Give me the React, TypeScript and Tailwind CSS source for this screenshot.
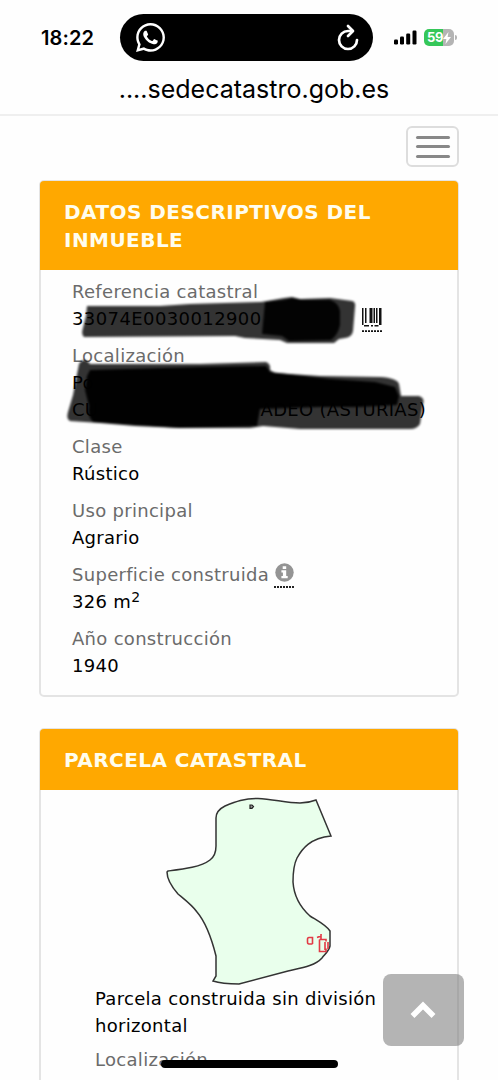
import type { ReactNode } from 'react';
import { FaWhatsapp } from 'react-icons/fa';

function StatusBar() {
  return (
    <div className="relative h-[75px] shrink-0">
      <div className="absolute left-[41px] top-[24px] text-[20px] leading-[28px] font-semibold tracking-[0.1px]">18:22</div>
      <div className="absolute left-[120px] top-[14px] flex h-[47px] w-[253px] items-center justify-between rounded-full bg-black pl-[14px] pr-[13px] text-white">
        <FaWhatsapp className="h-[33px] w-[33px]" />
        <svg viewBox="0 0 24 28" className="h-[28px] w-[24px]" fill="none" stroke="currentColor" strokeWidth="2.7" strokeLinecap="round" strokeLinejoin="round">
          <path d="M21 16a9 9 0 1 1-9-9h4.500" />
          <path d="M12 2l5 5-5 5" />
        </svg>
      </div>
      <svg viewBox="0 0 24 16" className="absolute left-[393px] top-[30px] h-[16px] w-[24px]">
        <rect x="1" y="9.500" width="4" height="5" rx="1.200" />
        <rect x="7" y="6.500" width="4" height="8" rx="1.200" />
        <rect x="13.200" y="3.500" width="4" height="11" rx="1.200" />
        <rect x="19.500" y="0.500" width="4" height="14" rx="1.200" />
      </svg>
      <div className="absolute left-[424px] top-[29px] flex h-[17px] w-[30px] items-center overflow-hidden rounded-[5px] bg-[linear-gradient(90deg,#35c759_62%,#b4b4b4_62%)] pl-[3px] text-[13px] font-bold tracking-[-0.3px] text-white">
        59
        <svg viewBox="0 0 8 12" className="h-[12px] w-[8px]" fill="currentColor">
          <path d="M5.500 0L0 7h3.400L2.500 12 8 5H4.600z" />
        </svg>
      </div>
      <div className="absolute left-[455px] top-[35px] h-[5px] w-[2px] rounded-r bg-[#b4b4b4]" />
    </div>
  );
}

function Card({ title, className, children }: { title: ReactNode; className: string; children: ReactNode }) {
  return (
    <section className={`mx-[39px] w-[420px] shrink-0 rounded-[5px] border-2 border-[#e4e4e4] ${className}`}>
      <h2 className="-mx-px -mt-px rounded-t-[4px] bg-[#ffa800] px-[24px] pb-[16px] pt-[17px] text-[20px] leading-[28px] font-bold tracking-[0.45px] text-[#fffdee]">
        {title}
      </h2>
      {children}
    </section>
  );
}

function Field({ label, children }: { label: ReactNode; children: ReactNode }) {
  return (
    <div className="mb-[9px]">
      <dt className="flex h-[28px] items-center text-[#6b6b6b]">{label}</dt>
      <dd className="leading-[27px] text-black">{children}</dd>
    </div>
  );
}

function Barcode() {
  return (
    <svg viewBox="0 0 20 25" className="ml-[7px] h-[25px] w-[20px] translate-y-[2px]" fill="#111">
      <path d="M0 0h1.500v17H0zM3 0h1.500v15H3zM7.500 0h3v15h-3zM11.500 0h1.500v15h-1.500zM14 0h1.500v15H14zM17 0h2.500v17H17z" />
      <path d="M2 17h5v1.500H2zM9 17h2v1.500H9zM12.500 17h4v1.500h-4z" />
      <path d="M0 23.200h20" stroke="#111" strokeWidth="1.800" strokeDasharray="2 1" />
    </svg>
  );
}

function InfoIcon() {
  return (
    <span className="ml-[5px] flex h-[25px] w-[20px] translate-y-[1px] flex-col items-center justify-between">
      <svg viewBox="0 0 19 19" className="h-[19px] w-[19px]">
        <circle cx="9.500" cy="9.500" r="9.200" fill="#949494" />
        <path d="M7.700 3.200h3.500v2.700H7.700zM6.400 7.300h4.800v5.700h1.500v2.200H6.400V13h1.500V9.500H6.400z" fill="#fff" />
      </svg>
      <svg viewBox="0 0 20 2" className="h-[2px] w-[20px]">
        <path d="M0 1h20" stroke="#222" strokeWidth="1.800" strokeDasharray="2 1" />
      </svg>
    </span>
  );
}

// marker strokes over the private values, coordinates follow the card body
function MarkerStrokes() {
  return (
    <svg viewBox="60 290 380 150" className="pointer-events-none absolute left-[19px] top-[21px] h-[150px] w-[380px]">
      <defs>
        <filter id="soft" x="-5%" y="-10%" width="110%" height="120%">
          <feGaussianBlur stdDeviation="1.300" />
        </filter>
      </defs>
      <g filter="url(#soft)">
        <path fill="#060304" fillOpacity=".8" d="M87 305L160 305 190 303 261 301 284 297 292 296 300 298 330 297 352 300Q356 301 355 306L353 330Q352 336 345 337L339 338 334 342 287 342 280 339 245 337 235 335 84 336Q81 334 83 327L86 315Z" />
        <path fill="#000" fillOpacity=".94" d="M265 301L284 299 292 297 302 299 330 299Q339 302 340 310L340 324Q338 334 331 339L289 340 282 335 262 333Z" />
        <path fill="#060304" fillOpacity=".8" d="M79 363Q84 355 90 363L150 363 200 363 266 361Q271 363 270 369L275 372 320 375 380 376Q397 377 399 383L401 395 419 395Q425 397 423 403L420 423Q417 428 410 428L300 428 263 425 250 427 180 427 135 425 100 422 70 420Q66 418 68 411L73 394Z" />
        <path fill="#000" fillOpacity=".97" d="M90 369L200 366 266 365 270 371 330 378 375 381 395 386 399 395 397 404 360 406 320 406 260 408 257 425 180 427 135 424 93 421Q87 414 89 405L85 389 87 375Z" />
      </g>
    </svg>
  );
}

function ParcelMap() {
  return (
    <svg viewBox="160 792 180 196" className="ml-[119px] block h-[196px] w-[180px]">
      <path
        d="M168 871C184 869 201 867 210 860C214 857 216 851 216 846V818C216 812 219 809 225 806C235 802 245 798 258 798.500C273 799 286 803 300 803C306 803 311 802 316 800L331 836C310 838 302 849 297 858C293 866 293 875 293 882C294 897 300 907 310 916C318 921 326 925 330 931V946C329 951 325 954 322 958C315 966 301 968 288 971L239 984C230 984 222 984 213 981L216 976V956C213 944 208 925 197 912C192 905 184 899 178 894C171 886 167 879 167 872Z"
        fill="#e9ffec"
        stroke="#333"
        strokeWidth="1.500"
      />
      <path d="M250 805h2l1.500 1.500-1.500 1.800h-2z" fill="#999" stroke="#222" strokeWidth="1.200" />
      <path d="M312.500 944v-6.500h-3.500q-1.500 0-1.500 2v2.500q0 2 1.500 2h3.500M317 937.500l4-1.500v3M321 934v5M319.500 939.500h6.500v2M319.500 939.500v12h6.500v-3M325 950v-8M328 942v7" fill="none" stroke="#e23a45" strokeWidth="1.600" />
    </svg>
  );
}

export default function App() {
  return (
    <div className="relative flex h-[1080px] w-[498px] flex-col overflow-hidden bg-[#fefefe] font-['Inter',sans-serif] text-black">
      <StatusBar />
      <div className="h-[41px] shrink-0 border-b-2 border-[#efefef] pl-[10px] text-center text-[25px] leading-[28px]">
        ....sedecatastro.gob.es
      </div>

      <div className="flex h-[64px] shrink-0 justify-end pr-[39px] pt-[10px]">
        <button type="button" aria-label="Menú" className="flex h-[41px] w-[53px] flex-col items-center justify-center gap-[6.5px] rounded-[6px] border-2 border-[#dddddd]">
          <span className="h-[3px] w-[34px] rounded-sm bg-[#888]" />
          <span className="h-[3px] w-[34px] rounded-sm bg-[#888]" />
          <span className="h-[3px] w-[34px] rounded-sm bg-[#888]" />
        </button>
      </div>

      <main className="flex flex-col font-['DejaVu_Sans',sans-serif] text-[18px] tracking-[0.3px]">
        <Card className="h-[517px]" title={<>DATOS DESCRIPTIVOS DEL<br />INMUEBLE</>}>
          <dl className="relative pl-[31px] pt-[7px]">
            <Field label="Referencia catastral">
              <span className="flex h-[27px] items-center">
                <span className="w-[283px] tracking-[0.4px]">33074E0030012900</span>
                <Barcode />
              </span>
            </Field>
            <Field label="Localización">
              <span className="block">Po</span>
              <span className="flex w-[354px] justify-between whitespace-nowrap">
                <span>CU</span>
                <span>ADEO (ASTURIAS)</span>
              </span>
            </Field>
            <Field label="Clase">Rústico</Field>
            <Field label="Uso principal">Agrario</Field>
            <Field label={<>Superficie construida <InfoIcon /></>}>
              326 m<sup className="relative -top-[6px] align-baseline text-[14px] leading-none">2</sup>
            </Field>
            <Field label="Año construcción">1940</Field>
            <MarkerStrokes />
          </dl>
        </Card>

        <Card className="mt-[31px] h-[420px]" title="PARCELA CATASTRAL">
          <div className="pt-[2px]">
            <ParcelMap />
            <div className="pl-[54px]">
              <p className="-mt-[3px] leading-[27px]">
                Parcela construida sin división<br />horizontal
              </p>
              <p className="mt-[7px] leading-[28px] text-[#6b6b6b]">Localización</p>
              <p className="pt-[2px] leading-[27px]">Polígono</p>
            </div>
          </div>
        </Card>
      </main>

      <button type="button" aria-label="Subir" className="absolute left-[383px] top-[974px] flex h-[72px] w-[81px] items-center justify-center rounded-[8px] bg-[#777]/55">
        <svg viewBox="0 0 26 18" className="h-[18px] w-[26px] -translate-x-[1px]">
          <path d="M2.500 15L13 4.500 23.500 15" fill="none" stroke="#fff" strokeWidth="5.500" />
        </svg>
      </button>
      <div className="absolute left-[161px] top-[1060px] h-[8px] w-[177px] rounded-full bg-black" />
    </div>
  );
}
